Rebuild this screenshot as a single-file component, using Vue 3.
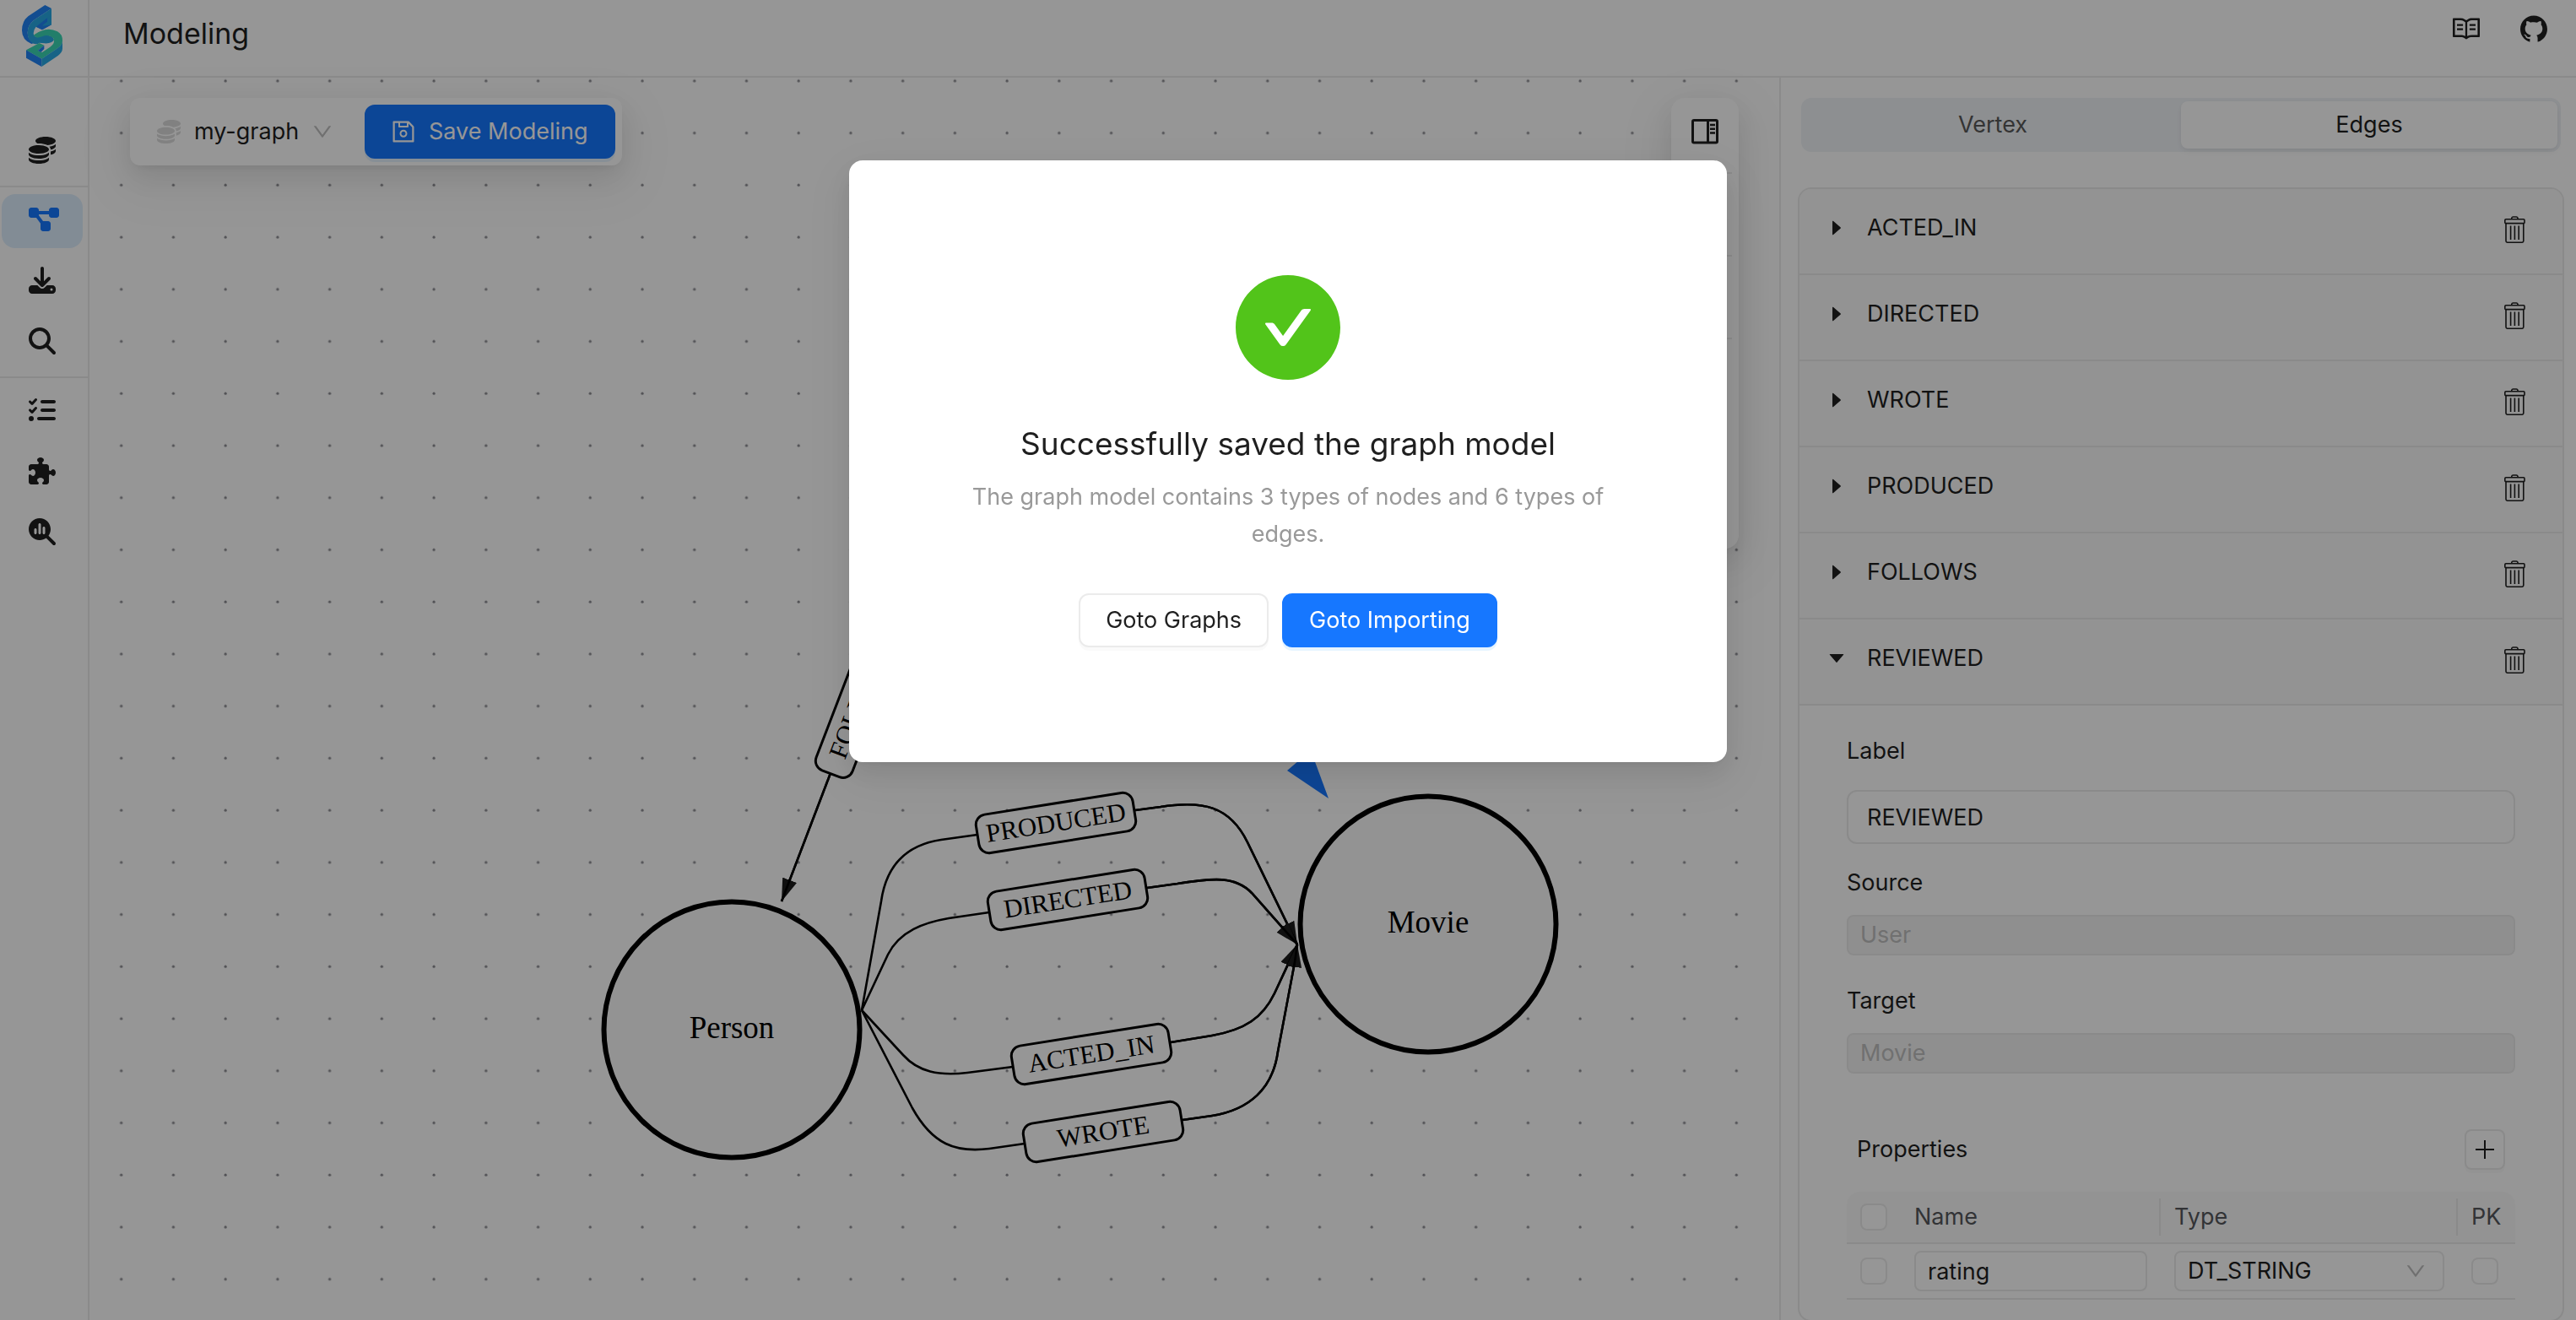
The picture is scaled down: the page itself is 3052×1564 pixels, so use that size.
<script setup>
import { ref } from 'vue'

const coins = 'M512 80c0 18-14.3 34.6-38.4 48c-29.1 16.1-72.5 27.5-122.3 30.9c-3.7-1.8-7.4-3.5-11.3-5C300.6 137.4 248.2 128 192 128c-8.3 0-16.4 .2-24.5 .6l-1.1-.6C142.3 114.6 128 98 128 80c0-44.2 86-80 192-80S512 35.8 512 80zM160.7 161.1c10.2-.7 20.7-1.1 31.3-1.1c62.2 0 117.4 12.3 152.5 31.4C369.3 204.9 384 221.7 384 240c0 4-.7 7.9-2.1 11.7c-4.6 13.2-17 25.3-35 35.5c-.1 .1-.3 .1-.4 .2c-.3 .2-.6 .3-.9 .5c-35 19.4-90.8 32-153.6 32c-59.6 0-112.9-11.3-148.2-29.1c-1.9-.9-3.7-1.9-5.5-2.9C14.3 274.6 0 258 0 240c0-34.8 53.4-64.5 128-75.4c10.5-1.5 21.4-2.7 32.7-3.5zM416 240c0-21.9-10.6-39.9-24.1-53.4c28.3-4.4 54.2-11.4 76.2-20.5c16.3-6.8 31.5-15.2 43.9-25.5V176c0 19.3-16.5 37.1-43.8 50.9c-14.6 7.4-32.4 13.7-52.4 18.5c.1-1.8 .2-3.5 .2-5.3zm-32 96c0 18-14.3 34.6-38.4 48c-1.8 1-3.6 1.9-5.5 2.9C304.9 404.7 251.6 416 192 416c-62.8 0-118.6-12.6-153.6-32C14.3 370.6 0 354 0 336V300.6c12.5 10.3 27.6 18.7 43.9 25.5C83.4 342.6 135.8 352 192 352s108.6-9.4 148.1-25.9c7.8-3.2 15.3-6.9 22.4-10.9c6.1-3.4 11.8-7.2 17.2-11.2c1.5-1.1 2.9-2.3 4.3-3.4V304v5.7V336zm32 0V304 278.1c19-4.2 36.5-9.5 52.1-16c16.3-6.8 31.5-15.2 43.9-25.5V272c0 10.5-5 21-14.9 30.9c-16.3 16.3-45 29.7-81.3 38.4c.1-1.7 .2-3.5 .2-5.3zM192 448c56.2 0 108.6-9.4 148.1-25.9c16.3-6.8 31.5-15.2 43.9-25.5V432c0 44.2-86 80-192 80S0 476.2 0 432V396.6c12.5 10.3 27.6 18.7 43.9 25.5C83.4 438.6 135.8 448 192 448z'

const menu = [
  [
    { name: 'Graphs', width: 512, path: coins },
  ],
  [
    { name: 'Modeling', width: 576, active: true, path: 'M0 80C0 53.5 21.5 32 48 32h96c26.5 0 48 21.5 48 48V96H384V80c0-26.5 21.5-48 48-48h96c26.5 0 48 21.5 48 48v96c0 26.5-21.5 48-48 48H432c-26.5 0-48-21.5-48-48V160H192v16c0 1.7-.1 3.4-.3 5L272 288h96c26.5 0 48 21.5 48 48v96c0 26.5-21.5 48-48 48H272c-26.5 0-48-21.5-48-48V336c0-1.7 .1-3.4 .3-5L144 224H48c-26.5 0-48-21.5-48-48V80z' },
    { name: 'Importing', width: 512, path: 'M288 32c0-17.7-14.3-32-32-32s-32 14.3-32 32V274.7l-73.4-73.4c-12.5-12.5-32.8-12.5-45.3 0s-12.5 32.8 0 45.3l128 128c12.5 12.5 32.8 12.5 45.3 0l128-128c12.5-12.5 12.5-32.8 0-45.3s-32.8-12.5-45.3 0L288 274.7V32zM64 352c-35.3 0-64 28.7-64 64v32c0 35.3 28.7 64 64 64H448c35.3 0 64-28.7 64-64V416c0-35.3-28.7-64-64-64H346.5l-45.3 45.3c-25 25-65.5 25-90.5 0L165.5 352H64zm368 56a24 24 0 1 1 0 48 24 24 0 1 1 0-48z' },
    { name: 'Querying', width: 512, path: 'M416 208c0 45.9-14.9 88.3-40 122.7L502.6 457.4c12.5 12.5 12.5 32.8 0 45.3s-32.8 12.5-45.3 0L330.7 376c-34.4 25.2-76.8 40-122.7 40C93.1 416 0 322.9 0 208S93.1 0 208 0S416 93.1 416 208zM208 352a144 144 0 1 0 0-288 144 144 0 1 0 0 288z' },
  ],
  [
    { name: 'Jobs', width: 512, path: 'M152.1 38.2c9.9 8.9 10.7 24 1.8 33.9l-72 80c-4.4 4.9-10.6 7.8-17.2 7.9s-12.9-2.4-17.6-7L7 113C-2.3 103.6-2.3 88.4 7 79s24.6-9.4 33.9 0l22.1 22.1 55.1-61.2c8.9-9.9 24-10.7 33.9-1.8zm0 160c9.9 8.9 10.7 24 1.8 33.9l-72 80c-4.4 4.9-10.6 7.8-17.2 7.9s-12.9-2.4-17.6-7L7 273c-9.4-9.4-9.4-24.6 0-33.9s24.6-9.4 33.9 0l22.1 22.1 55.1-61.2c8.9-9.9 24-10.7 33.9-1.8zM224 96c0-17.7 14.3-32 32-32H480c17.7 0 32 14.3 32 32s-14.3 32-32 32H256c-17.7 0-32-14.3-32-32zm0 160c0-17.7 14.3-32 32-32H480c17.7 0 32 14.3 32 32s-14.3 32-32 32H256c-17.7 0-32-14.3-32-32zM160 416c0-17.7 14.3-32 32-32H480c17.7 0 32 14.3 32 32s-14.3 32-32 32H192c-17.7 0-32-14.3-32-32zM48 368a48 48 0 1 1 0 96 48 48 0 1 1 0-96z' },
    { name: 'Extensions', width: 512, path: 'M192 104.8c0-9.2-5.8-17.3-13.2-22.8C167.2 73.3 160 61.3 160 48c0-26.5 28.7-48 64-48s64 21.5 64 48c0 13.3-7.2 25.3-18.8 34c-7.4 5.5-13.2 13.6-13.2 22.8v0c0 12.8 10.4 23.2 23.2 23.2H336c26.5 0 48 21.5 48 48v56.8c0 12.8 10.4 23.2 23.2 23.2v0c9.2 0 17.3-5.8 22.8-13.2c8.7-11.6 20.7-18.8 34-18.8c26.5 0 48 28.7 48 64s-21.5 64-48 64c-13.3 0-25.3-7.2-34-18.8c-5.5-7.4-13.6-13.2-22.8-13.2v0c-12.8 0-23.2 10.4-23.2 23.2V464c0 26.5-21.5 48-48 48H279.2c-12.8 0-23.2-10.4-23.2-23.2v0c0-9.2 5.8-17.3 13.2-22.8c11.6-8.7 18.8-20.7 18.8-34c0-26.5-28.7-48-64-48s-64 21.5-64 48c0 13.3 7.2 25.3 18.8 34c7.4 5.5 13.2 13.6 13.2 22.8v0c0 12.8-10.4 23.2-23.2 23.2H48c-26.5 0-48-21.5-48-48V343.2C0 330.4 10.4 320 23.2 320v0c9.2 0 17.3 5.8 22.8 13.2C54.7 344.8 66.7 352 80 352c26.5 0 48-28.7 48-64s-21.5-64-48-64c-13.3 0-25.3 7.2-34 18.8C40.5 250.2 32.4 256 23.2 256v0C10.4 256 0 245.6 0 232.8V176c0-26.5 21.5-48 48-48H168.8c12.8 0 23.2-10.4 23.2-23.2v0z' },
    { name: 'Explore', width: 512, path: 'M416 208c0 45.9-14.9 88.3-40 122.7L502.6 457.4c12.5 12.5 12.5 32.8 0 45.3s-32.8 12.5-45.3 0L330.7 376c-34.4 25.2-76.8 40-122.7 40C93.1 416 0 322.9 0 208S93.1 0 208 0S416 93.1 416 208zm-312 8v64c0 13.3 10.7 24 24 24s24-10.7 24-24V216c0-13.3-10.7-24-24-24s-24 10.7-24 24zm80-96V280c0 13.3 10.7 24 24 24s24-10.7 24-24V120c0-13.3-10.7-24-24-24s-24 10.7-24 24zm80 64v96c0 13.3 10.7 24 24 24s24-10.7 24-24V184c0-13.3-10.7-24-24-24s-24 10.7-24 24z' },
  ],
]

const chevron = 'M884 256h-75c-5.1 0-9.9 2.5-12.9 6.6L512 654.2 227.9 262.6c-3-4.1-7.8-6.6-12.9-6.6h-75c-6.5 0-10.3 7.4-6.5 12.7l352.6 486.1c12.8 17.6 39 17.6 51.7 0l352.6-486.1c3.9-5.3.1-12.7-6.4-12.7z'

const nodes = [
  { label: 'Person', x: 867, y: 1220 },
  { label: 'Movie', x: 1692, y: 1095 },
]

const edges = [
  { label: 'FOLLOWS', x: 1018, y: 829, angle: -69, tail: 'M1051 742L1100 614', head: 'M984 916L926 1068' },
  { label: 'PRODUCED', x: 1251, y: 975, angle: -9, tail: 'M1021 1197L1044 1068C1050 1025 1075 1001 1115 995L1158 989', head: 'M1345 960L1375 956C1425 948 1457 955 1478 998L1537 1119' },
  { label: 'DIRECTED', x: 1265, y: 1066, angle: -9, tail: 'M1021 1197L1052 1131C1066 1103 1095 1093 1124 1088L1172 1081', head: 'M1359 1052L1395 1047C1438 1040 1464 1038 1483 1058L1537 1119' },
  { label: 'ACTED_IN', x: 1293, y: 1249, angle: -9, tail: 'M1021 1197L1070 1250C1088 1270 1112 1275 1146 1271L1200 1264', head: 'M1387 1235L1436 1227C1475 1220 1496 1206 1510 1177L1537 1119' },
  { label: 'WROTE', x: 1307, y: 1341, angle: -9, tail: 'M1021 1197L1081 1313C1105 1356 1132 1366 1172 1361L1214 1355', head: 'M1401 1327L1436 1322C1480 1315 1508 1290 1514 1246L1534 1140L1537 1119' },
]

const edgeTypes = ['ACTED_IN', 'DIRECTED', 'WROTE', 'PRODUCED', 'FOLLOWS', 'REVIEWED']
const opened = ref('REVIEWED')
const label = ref('REVIEWED')
const property = ref('rating')
const tab = ref('Edges')
</script>

<template>
  <div class="app">
    <header class="header">
      <a class="logo" href="#" aria-label="Home">
        <svg width="50" height="75" viewBox="75 15 150 225">
          <path fill="#2183f5" d="M160 18 183 30 120 72Q98 90 98 116 98 140 120 153L112 156Q78 142 78 108 78 76 100 58Z" />
          <path fill="#27a8e4" d="M183 30V88L150 106 128 95Q120 104 119 118 119 128 128 131L160 124Q190 126 192 142 184 156 157 154L140 152Q132 160 116 154 98 140 98 116 98 90 120 72Z" />
          <path fill="#2183f5" d="M128 95 168 64V78L152 89 183 88 150 106Z" />
          <path fill="#27a8e4" d="M152 89 168 78 168 64 183 56V88L152 92Z" />
          <path fill="#3ad6b4" d="M119 126Q126 118 146 110 176 98 204 112 222 122 222 144 222 160 204 172L148 209 93 178 140 153 157 161 134 180 150 186 178 167Q198 154 190 136 172 120 150 130L132 134Z" />
          <path fill="#2183f5" d="M93 178 148 209V237L93 206ZM134 180 157 161V174L146 185Z" />
          <path fill="#27a8e4" d="M148 209 204 172Q222 160 222 144V172Q222 186 206 198L148 237Z" />
        </svg>
      </a>
      <h1 class="page-title">Modeling</h1>
      <nav class="links" aria-label="Resources">
        <a href="#" aria-label="Documentation">
          <svg width="32" height="32" viewBox="64 64 896 896" fill="currentColor"><path d="M928 161H699.2c-49.1 0-97.1 14.1-138.4 40.7L512 233l-48.8-31.3A255.2 255.2 0 00324.8 161H96c-17.7 0-32 14.3-32 32v568c0 17.7 14.3 32 32 32h228.8c49.1 0 97.1 14.1 138.4 40.7l44.4 28.6c1.3.8 2.8 1.3 4.3 1.3s3-.4 4.3-1.3l44.4-28.6C602 807.1 650.1 793 699.2 793H928c17.7 0 32-14.3 32-32V193c0-17.7-14.3-32-32-32zM324.8 721H136V233h188.8c35.4 0 69.8 10.1 99.5 29.2l48.8 31.3 6.9 4.5v462c-47.6-25.6-100.8-39-155.2-39zm563.2 0H699.2c-54.4 0-107.6 13.4-155.2 39V298l6.9-4.5 48.8-31.3c29.7-19.1 64.1-29.2 99.5-29.2H888v488zM396.9 361H211.1c-3.9 0-7.1 3.4-7.1 7.5v45c0 4.1 3.2 7.5 7.1 7.5h185.7c3.9 0 7.1-3.4 7.1-7.5v-45c.1-4.1-3.1-7.5-7-7.5zm223.1 7.5v45c0 4.1 3.2 7.5 7.1 7.5h185.7c3.9 0 7.1-3.4 7.1-7.5v-45c0-4.1-3.2-7.5-7.1-7.5H627.1c-3.9 0-7.1 3.4-7.1 7.5zM396.9 501H211.1c-3.9 0-7.1 3.4-7.1 7.5v45c0 4.1 3.2 7.5 7.1 7.5h185.7c3.9 0 7.1-3.4 7.1-7.5v-45c.1-4.1-3.1-7.5-7-7.5zm416 0H627.1c-3.9 0-7.1 3.4-7.1 7.5v45c0 4.1 3.2 7.5 7.1 7.5h185.7c3.9 0 7.1-3.4 7.1-7.5v-45c.1-4.1-3.1-7.5-7-7.5z" /></svg>
        </a>
        <a href="#" aria-label="GitHub">
          <svg width="32" height="32" viewBox="64 64 896 896" fill="currentColor"><path d="M511.6 76.3C264.3 76.2 64 276.4 64 523.5 64 718.9 189.3 885 363.8 946c23.5 5.9 19.9-10.8 19.9-22.2v-77.5c-135.7 15.9-141.2-73.9-150.3-88.9C215 726 171.5 718 184.5 703c30.9-15.9 62.4 4 98.9 57.9 26.4 39.1 77.9 32.5 104 26 5.7-23.5 17.9-44.5 34.7-60.8-140.6-25.2-199.2-111-199.2-213 0-49.5 16.3-95 48.3-131.7-20.4-60.5 1.9-112.3 4.9-120 58.1-5.2 118.5 41.6 123.2 45.3 33-8.9 70.7-13.6 112.9-13.6 42.4 0 80.2 4.9 113.5 13.9 11.3-8.6 67.3-48.8 121.3-43.9 2.9 7.7 24.7 58.3 5.5 118 32.4 36.8 48.9 82.7 48.9 132.3 0 102.2-59 188.1-200 212.9a127.5 127.5 0 0138.1 91v112.5c.8 9 0 17.9 15 17.9 177.1-59.7 304.6-227 304.6-424.1 0-247.2-200.4-447.3-447.5-447.3z" /></svg>
        </a>
      </nav>
    </header>

    <div class="body">
      <nav class="menu" aria-label="Main">
        <template v-for="(group, i) in menu" :key="i">
          <hr v-if="i > 0" class="menu-rule">
          <a v-for="item in group" :key="item.name" href="#" class="menu-item" :class="{ active: item.active }" :aria-label="item.name">
            <svg height="32" :viewBox="`0 0 ${item.width} 512`" fill="currentColor"><path :d="item.path" /></svg>
          </a>
        </template>
      </nav>

      <main class="canvas">
        <svg class="graph" width="100%" height="100%">
          <defs>
            <pattern id="dots" x="7.7" y="-26.2" width="61.73" height="61.73" patternUnits="userSpaceOnUse">
              <circle cx="30" cy="30" r="1.6" fill="#8b8b91" />
            </pattern>
            <marker id="arrow" viewBox="0 0 27 18" refX="27" refY="9" markerWidth="27" markerHeight="18" markerUnits="userSpaceOnUse" orient="auto">
              <path d="M0 0 27 9 0 18Z" fill="#1c1c1c" />
            </marker>
          </defs>
          <rect width="100%" height="100%" fill="url(#dots)" />
          <g transform="translate(-106 -92)">
            <path d="M1574 946 1525 913 1553 889Z" fill="#1677ff" />
            <g v-for="edge in edges" :key="edge.label">
              <path class="edge" :d="edge.tail" />
              <path class="edge" :d="edge.head" marker-end="url(#arrow)" />
              <path class="edge" :d="edge.head" />
              <g :transform="`translate(${edge.x} ${edge.y}) rotate(${edge.angle})`">
                <rect class="edge-box" x="-94" y="-23" width="188" height="46" rx="12" />
                <text class="edge-label" y="10">{{ edge.label }}</text>
              </g>
            </g>
            <g v-for="node in nodes" :key="node.label" :transform="`translate(${node.x} ${node.y})`">
              <circle class="node" r="151.5" />
              <text class="node-label" y="10">{{ node.label }}</text>
            </g>
          </g>
        </svg>

        <div class="toolbar">
          <div class="graph-select">
            <svg class="coins" width="28" height="28" viewBox="0 0 512 512"><path :d="coins" /></svg>
            <select aria-label="Graph"><option>my-graph</option></select>
            <svg class="chevron" width="24" height="24" viewBox="64 64 896 896"><path :d="chevron" /></svg>
          </div>
          <button class="btn primary" type="button">
            <svg width="28" height="28" viewBox="64 64 896 896" fill="currentColor"><path d="M893.3 293.3L730.7 130.7c-7.5-7.5-16.7-13-26.7-16V112H144c-17.7 0-32 14.3-32 32v736c0 17.7 14.3 32 32 32h736c17.7 0 32-14.3 32-32V338.5c0-17-6.7-33.2-18.7-45.2zM384 184h256v104H384V184zm456 656H184V184h136v136c0 17.7 14.3 32 32 32h320c17.7 0 32-14.3 32-32V205.8l136 136V840zM512 442c-79.5 0-144 64.5-144 144s64.5 144 144 144 144-64.5 144-144-64.5-144-144-144zm0 224c-44.2 0-80-35.8-80-80s35.8-80 80-80 80 35.8 80 80-35.8 80-80 80z" /></svg>
            Save Modeling
          </button>
        </div>

        <div class="tools">
          <button type="button" aria-label="Toggle side panel">
            <svg width="32" height="30" viewBox="0 0 32 30" fill="none" stroke="currentColor">
              <rect x="1.5" y="1.5" width="29" height="26.5" rx="1.5" stroke-width="3" />
              <path d="M19.5 2V28" stroke-width="3" />
              <path d="M22 7H28M22 11.7H28M22 16.5H28" stroke-width="2.6" />
            </svg>
          </button>
          <hr>
          <button type="button" aria-label="Add vertex"><svg width="32" height="32" viewBox="0 0 32 32"><path d="M16 4V28M4 16H28" stroke="currentColor" stroke-width="3" /></svg></button>
          <hr>
          <button type="button" aria-label="Clear"><svg width="32" height="32" viewBox="0 0 32 32"><path d="M6 6 26 26M26 6 6 26" stroke="currentColor" stroke-width="3" /></svg></button>
          <hr>
          <div class="tool-group">
            <button type="button" aria-label="Zoom in"><svg width="32" height="32" viewBox="0 0 32 32"><path d="M16 4V28M4 16H28" stroke="currentColor" stroke-width="3" /></svg></button>
            <button type="button" aria-label="Zoom out"><svg width="32" height="32" viewBox="0 0 32 32"><path d="M4 16H28" stroke="currentColor" stroke-width="3" /></svg></button>
            <button type="button" aria-label="Fit view"><svg width="32" height="32" viewBox="0 0 32 32"><path d="M5 5H27V27H5Z" fill="none" stroke="currentColor" stroke-width="3" /></svg></button>
          </div>
        </div>
      </main>

      <aside class="panel">
        <div class="segmented" role="tablist">
          <button v-for="name in ['Vertex', 'Edges']" :key="name" type="button" role="tab" :aria-selected="tab === name" :class="{ selected: tab === name }" @click="tab = name">{{ name }}</button>
        </div>

        <div class="collapse">
          <section v-for="name in edgeTypes" :key="name">
            <div class="collapse-header">
              <button class="collapse-toggle" type="button" :aria-expanded="opened === name" @click="opened = name">
                <svg :class="{ down: opened === name }" width="24" height="24" viewBox="0 0 1024 1024" fill="currentColor"><path d="M715.8 493.5L335 165.1c-14.2-12.2-35-1.2-35 18.5v656.8c0 19.7 20.8 30.7 35 18.5l380.8-328.4c10.9-9.4 10.9-27.6 0-37z" /></svg>
                {{ name }}
              </button>
              <button class="trash" type="button" :aria-label="`Delete ${name}`">
                <svg width="25" height="32" viewBox="0 0 25 32" fill="none" stroke="currentColor" stroke-width="1.6">
                  <path d="M8.8 3.6V2.2Q9.2 1 10.4 1H14.4Q15.6 1 16 2.2V3.6" />
                  <rect x=".8" y="3.8" width="23.2" height="4.8" rx="1.2" />
                  <path d="M2 8.8V29.6Q2 31.2 3.6 31.2H21.2Q22.8 31.2 22.8 29.6V8.8" />
                  <path d="M7.6 11.5V28M12.4 11.5V28M17.2 11.5V28" />
                </svg>
              </button>
            </div>

            <div v-if="opened === name" class="collapse-body">
              <div class="field">
                <label for="edge-label">Label</label>
                <input id="edge-label" v-model="label" class="large" type="text">
              </div>
              <div class="field">
                <label for="edge-source">Source</label>
                <select id="edge-source" disabled><option>User</option></select>
              </div>
              <div class="field">
                <label for="edge-target">Target</label>
                <select id="edge-target" disabled><option>Movie</option></select>
              </div>

              <div class="properties-head">
                <h2>Properties</h2>
                <button type="button" class="add" aria-label="Add property">
                  <svg width="24" height="24" viewBox="0 0 24 24"><path d="M12 1V23M1 12H23" stroke="currentColor" stroke-width="2" /></svg>
                </button>
              </div>
              <table class="properties">
                <colgroup><col class="col-check"><col class="col-name"><col><col class="col-pk"></colgroup>
                <thead>
                  <tr>
                    <th><input type="checkbox" aria-label="Select all"></th>
                    <th class="ruled">Name</th>
                    <th class="ruled">Type</th>
                    <th>PK</th>
                  </tr>
                </thead>
                <tbody>
                  <tr>
                    <td><input type="checkbox" aria-label="Select rating"></td>
                    <td><input v-model="property" type="text" aria-label="Name"></td>
                    <td>
                      <div class="type-select">
                        <select aria-label="Type"><option>DT_STRING</option></select>
                        <svg class="chevron" width="24" height="24" viewBox="64 64 896 896"><path :d="chevron" /></svg>
                      </div>
                    </td>
                    <td><input type="checkbox" aria-label="Primary key"></td>
                  </tr>
                </tbody>
              </table>
            </div>
          </section>
        </div>
      </aside>
    </div>

    <div class="mask">
      <div class="modal" role="dialog" aria-modal="true" aria-labelledby="result-title">
        <svg class="result-icon" width="124" height="124" viewBox="64 64 896 896"><path d="M512 64C264.6 64 64 264.6 64 512s200.6 448 448 448 448-200.6 448-448S759.4 64 512 64zm193.5 301.7l-210.6 292a31.8 31.8 0 01-51.7 0L318.5 484.9c-3.8-5.3 0-12.7 6.5-12.7h46.9c10.2 0 19.9 4.9 25.9 13.3l71.2 98.8 157.2-218c6-8.3 15.6-13.3 25.9-13.3H699c6.5 0 10.3 7.4 6.5 12.7z" /></svg>
        <h2 id="result-title">Successfully saved the graph model</h2>
        <p>The graph model contains 3 types of nodes and 6 types of edges.</p>
        <div class="actions">
          <button class="btn" type="button">Goto Graphs</button>
          <button class="btn primary" type="button">Goto Importing</button>
        </div>
      </div>
    </div>
  </div>
</template>

<style>
body {
  margin: 0;
}
</style>

<style scoped>
.app {
  --ink: #1f1f1f;
  --line: #ebebeb;
  --shadow: 0 12px 32px 0 rgba(0, 0, 0, .08), 0 6px 12px -8px rgba(0, 0, 0, .12), 0 18px 56px 16px rgba(0, 0, 0, .05);
  display: flex;
  flex-direction: column;
  height: 100vh;
  overflow: hidden;
  background: #fff;
  color: var(--ink);
  font-family: Inter, "Liberation Sans", sans-serif;
  font-size: 27px;
  line-height: 44px;
}

.app *,
.app *::before {
  box-sizing: border-box;
}

svg {
  display: block;
  flex: none;
}

a {
  color: inherit;
}

button,
input,
select {
  margin: 0;
  padding: 0;
  border: 0;
  background: none;
  color: inherit;
  font: inherit;
  appearance: none;
}

h1,
h2,
p,
hr {
  margin: 0;
  border: 0;
  font-weight: 400;
}

.header {
  display: flex;
  flex: none;
  height: 92px;
  border-bottom: 2px solid var(--line);
}

.logo {
  display: flex;
  width: 106px;
  padding: 5px 0 0 25px;
  border-right: 2px solid var(--line);
}

.page-title {
  flex: 1;
  padding-left: 40px;
  font-size: 34px;
  line-height: 80px;
}

.links {
  display: flex;
  gap: 48px;
  padding: 18px 34px 0 0;
}

.body {
  display: flex;
  flex: 1;
  min-height: 0;
}

.menu {
  display: flex;
  flex: none;
  flex-direction: column;
  gap: 8px;
  width: 106px;
  padding-top: 56px;
  border-right: 2px solid var(--line);
}

.menu-item {
  display: flex;
  align-items: center;
  height: 64px;
  margin: 0 6px 0 2px;
  padding: 0 0 4px 32px;
  border-radius: 16px;
}

.menu-item.active {
  background: #deeefe;
  color: #1677ff;
}

.menu-rule {
  height: 2px;
  background: var(--line);
}

.canvas {
  position: relative;
  display: flex;
  flex: 1;
  align-items: flex-start;
  justify-content: space-between;
  min-width: 0;
  padding: 24px 48px;
}

.graph {
  position: absolute;
  inset: 0;
}

.edge {
  fill: none;
  stroke: #000;
  stroke-width: 2.6;
}

.edge-box {
  fill: #fff;
  stroke: #000;
  stroke-width: 3;
}

.node {
  fill: #fafafa;
  stroke: #000;
  stroke-width: 6;
}

.edge-label,
.node-label {
  fill: #000;
  font-family: "Liberation Serif", serif;
  font-size: 31px;
  text-anchor: middle;
}

.node-label {
  font-size: 37px;
}

.toolbar {
  position: relative;
  display: flex;
  gap: 8px;
  padding: 8px;
  border-radius: 12px;
  background: #fff;
  box-shadow: var(--shadow);
}

.graph-select {
  display: flex;
  align-items: center;
  gap: 16px;
  width: 262px;
  padding: 0 30px 0 24px;
}

.graph-select select {
  flex: 1;
  min-width: 0;
  margin-right: -16px;
}

.coins {
  fill: #dcdcdc;
}

.chevron {
  fill: #bfbfbf;
}

.btn {
  display: flex;
  align-items: center;
  gap: 16px;
  height: 64px;
  padding: 0 30px;
  border: 2px solid #ebebeb;
  border-radius: 12px;
  background: #fff;
  box-shadow: 0 4px 0 rgba(0, 0, 0, .02);
}

.btn.primary {
  border-color: #1677ff;
  background: #1677ff;
  box-shadow: 0 4px 0 rgba(5, 145, 255, .1);
  color: #fff;
}

.tools {
  position: relative;
  display: flex;
  flex-direction: column;
  gap: 16px;
  width: 80px;
  padding: 8px;
  border-radius: 16px;
  background: #fff;
  box-shadow: var(--shadow);
}

.tools button {
  display: flex;
  align-items: center;
  justify-content: center;
  height: 64px;
}

.tools hr {
  height: 2px;
  background: var(--line);
}

.tool-group {
  display: flex;
  flex-direction: column;
  gap: 16px;
}

.panel {
  position: relative;
  flex: none;
  width: 944px;
  padding: 24px 14px 0 20px;
  border-left: 2px solid var(--line);
  background: #fff;
}

.segmented {
  display: flex;
  margin: 0 4px 42px;
  padding: 4px;
  border-radius: 12px;
  background: #f0f3f7;
}

.segmented button {
  flex: 1;
  height: 56px;
  border-radius: 8px;
  color: #595959;
}

.segmented .selected {
  background: #fff;
  box-shadow: 0 2px 4px 0 rgba(0, 0, 0, .03), 0 2px 12px -2px rgba(0, 0, 0, .03), 0 4px 8px 0 rgba(0, 0, 0, .03);
  color: var(--ink);
}

.collapse {
  overflow: hidden;
  border: 2px solid var(--line);
  border-radius: 16px;
}

.collapse-header {
  display: flex;
  justify-content: space-between;
  height: 102px;
  padding: 24px 44px 0 32px;
  border-bottom: 2px solid var(--line);
  background: #fafafa;
}

.collapse-toggle {
  display: flex;
  flex: 1;
  align-items: center;
  gap: 24px;
  height: 44px;
}

.collapse-toggle .down {
  transform: rotate(90deg);
}

.trash {
  height: 48px;
}

.collapse-body {
  padding: 32px 56px 24px;
}

.field {
  display: flex;
  flex-direction: column;
  gap: 16px;
  margin-bottom: 32px;
}

.field:first-child {
  gap: 24px;
  margin-bottom: 24px;
}

input[type="text"],
.field select,
.type-select select {
  width: 100%;
  height: 48px;
  padding: 0 14px;
  border: 2px solid var(--line);
  border-radius: 8px;
  background: #fff;
}

input.large {
  height: 64px;
  padding: 0 22px;
  border-radius: 12px;
}

.field select:disabled {
  background: #f4f4f4;
  color: #bfbfbf;
  opacity: 1;
}

.properties-head {
  display: flex;
  align-items: center;
  justify-content: space-between;
  margin: 66px 12px 26px;
}

.properties-head h2 {
  font-size: 27px;
}

.add {
  display: flex;
  align-items: center;
  justify-content: center;
  width: 48px;
  height: 48px;
  border: 2px solid var(--line);
  border-radius: 8px;
  box-shadow: 0 4px 0 rgba(0, 0, 0, .02);
}

.properties {
  width: 100%;
  border-collapse: separate;
  border-spacing: 0;
  table-layout: fixed;
}

.col-check {
  width: 64px;
}

.col-name {
  width: 308px;
}

.col-pk {
  width: 68px;
}

.properties th,
.properties td {
  padding: 0 16px;
  border-bottom: 2px solid var(--line);
  text-align: left;
}

.properties th {
  position: relative;
  height: 62px;
  background: #fafafa;
  color: #55585c;
  font-weight: 400;
}

.properties th:first-child {
  border-top-left-radius: 16px;
}

.properties th:last-child {
  border-top-right-radius: 16px;
}

.ruled::before {
  position: absolute;
  top: 8px;
  right: 0;
  width: 2px;
  height: 44px;
  background: var(--line);
  content: "";
}

.properties td {
  height: 66px;
}

input[type="checkbox"] {
  display: block;
  width: 32px;
  height: 32px;
  border: 2px solid var(--line);
  border-radius: 8px;
  background: #fff;
}

.type-select {
  position: relative;
}

.type-select .chevron {
  position: absolute;
  top: 12px;
  right: 22px;
}

.mask {
  position: fixed;
  inset: 0;
  display: flex;
  align-items: flex-start;
  justify-content: center;
  padding-top: 190px;
  background: rgba(0, 0, 0, .41);
}

.modal {
  display: flex;
  flex-direction: column;
  align-items: center;
  width: 1040px;
  padding: 136px 112px;
  border-radius: 16px;
  background: #fff;
  box-shadow: var(--shadow);
  text-align: center;
}

.result-icon {
  fill: #52c41a;
}

.modal h2 {
  margin: 46px 0 11px;
  font-size: 37px;
  line-height: 60px;
}

.modal p {
  color: #999;
}

.actions {
  display: flex;
  gap: 16px;
  margin-top: 48px;
}
</style>
